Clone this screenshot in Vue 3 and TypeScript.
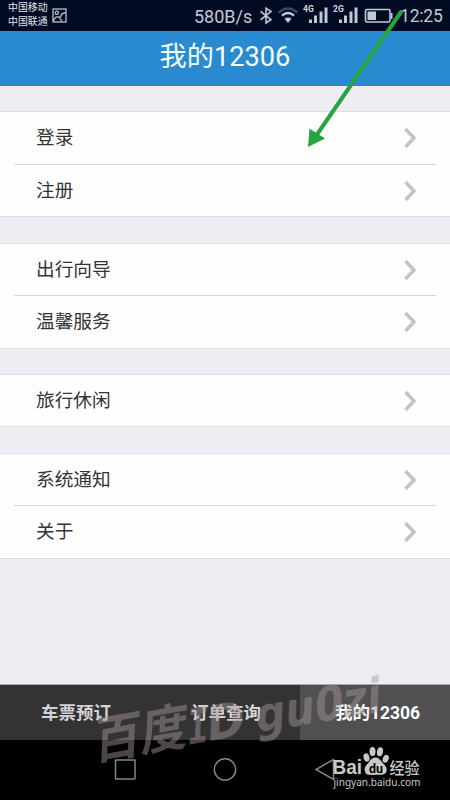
<script setup lang="ts">
import { ref } from 'vue'

interface MenuGroup {
  name: string
  items: string[]
}

const groups: MenuGroup[] = [
  { name: 'account', items: ['登录', '注册'] },
  { name: 'guide', items: ['出行向导', '温馨服务'] },
  { name: 'leisure', items: ['旅行休闲'] },
  { name: 'system', items: ['系统通知', '关于'] },
]

const tabs: string[] = ['车票预订', '订单查询', '我的12306']
const activeTab = ref(2)
</script>

<template>
  <div class="screen">
    <div class="status">
      <div class="carriers"><span>中国移动</span><span>中国联通</span></div>
      <svg class="picture" width="15" height="15" viewBox="0 0 15 15">
        <rect x="1" y="1" width="13" height="13" />
        <circle cx="4.800" cy="4.800" r="1.600" />
        <path d="M1.500 13Q3 8.500 6 9T9 7.500Q9.500 5.500 13.500 4.500M7.500 9.500L10 13.500" />
      </svg>
      <span class="speed">580B/s</span>
      <svg class="indicators" width="140" height="31" viewBox="0 0 140 31">
        <path class="line" d="M4.500 11.300L15 19.600L10 23V8.200L15 11.600L4.500 19.900" />
        <g class="wifi">
          <path class="dim" d="M22.500 12.600Q32 4.600 41.500 12.600" />
          <path d="M26 15.600Q32 10.600 38 15.600" />
        </g>
        <path class="fill" d="M28.500 18.800Q32 16 35.500 18.800L32 23Z" />
        <text class="net" x="47" y="11.500">4G</text>
        <path class="fill" d="M53 19.500h3v3.500h-3zM58 15.500h3V23h-3zM63.500 11.500h3V23h-3zM68.500 7.500h3V23h-3z" />
        <text class="net" x="77" y="11.500">2G</text>
        <path class="fill" d="M83 19.500h3v3.500h-3zM88 15.500h3V23h-3zM93.500 11.500h3V23h-3zM98.500 7.500h3V23h-3z" />
        <rect class="battery" x="109.500" y="9.500" width="24.500" height="12.500" rx="1.500" />
        <path class="fill" d="M111.500 11.500h8.500v8.500h-8.500zM135 13h1.500v6H135z" />
      </svg>
      <span class="clock">12:25</span>
    </div>

    <header class="header">我的12306</header>

    <main class="content">
      <section v-for="group in groups" :key="group.name" class="group" :class="group.name">
        <div v-for="item in group.items" :key="item" class="row">
          <span>{{ item }}</span>
          <svg class="chevron" width="14" height="22" viewBox="0 0 14 22">
            <path d="M2.500 2L11 11L2.500 20" />
          </svg>
        </div>
      </section>
    </main>

    <nav class="tabs">
      <button
        v-for="(tab, index) in tabs"
        :key="tab"
        class="tab"
        :class="{ active: index === activeTab }"
        @click="activeTab = index"
      >{{ tab }}</button>
    </nav>

    <div class="system-nav">
      <svg width="450" height="60" viewBox="0 0 450 60">
        <rect x="115.500" y="20" width="19.500" height="19" rx="0.500" />
        <circle cx="225" cy="29.500" r="10.700" />
        <path d="M333.500 19.500V39.500L316 29.500Z" />
      </svg>
    </div>

    <svg class="overlay" width="450" height="800" viewBox="0 0 450 800">
      <g class="signature" transform="translate(94 761) rotate(-9.800) skewX(-12)">
        <text class="signature-cn" x="0" y="-1" textLength="95" lengthAdjust="spacingAndGlyphs">百度</text>
        <text class="signature-mono" x="94" y="0" textLength="22" lengthAdjust="spacingAndGlyphs">I</text>
        <text class="signature-en" x="114" y="0" textLength="38" lengthAdjust="spacingAndGlyphs">D</text>
        <text class="signature-en" x="164" y="0" textLength="127" lengthAdjust="spacingAndGlyphs">gu0zi</text>
      </g>
      <g class="brand">
        <text class="brand-latin" x="332.500" y="773.500" textLength="29.500" lengthAdjust="spacingAndGlyphs">Bai</text>
        <ellipse cx="366.500" cy="757.500" rx="2.900" ry="4.200" transform="rotate(-15 366.500 757.500)" />
        <ellipse cx="372.500" cy="751.500" rx="3" ry="4.500" />
        <ellipse cx="380" cy="751.800" rx="3" ry="4.500" transform="rotate(10 380 751.800)" />
        <ellipse cx="385.700" cy="758.800" rx="2.900" ry="4.100" transform="rotate(20 385.700 758.800)" />
        <path d="M375.500 757.500C371 757.500 369.500 762 367 764.500C363.500 767.500 363.800 774.500 369.500 774.800C373 775 378 774.800 381.500 774.800C387.500 774.700 388 768 384.500 765C381.500 762 379.500 757.500 375.500 757.500Z" />
        <text class="brand-du" x="369" y="772.500" textLength="14" lengthAdjust="spacingAndGlyphs">du</text>
        <text class="brand-cn" x="389.500" y="773.500" textLength="30" lengthAdjust="spacingAndGlyphs">经验</text>
        <text class="brand-url" x="333.500" y="785.500" textLength="87" lengthAdjust="spacingAndGlyphs">jingyan.baidu.com</text>
      </g>
      <path class="arrow-line" d="M401 12L316 136" />
      <path class="arrow-head" d="M308 147L309.500 128.500L325 138.500Z" />
    </svg>
  </div>
</template>

<style>
body {
  margin: 0;
}
</style>

<style scoped>
.screen {
  position: relative;
  display: flex;
  flex-direction: column;
  width: 450px;
  height: 800px;
  overflow: hidden;
  background: #efedf4;
  font-family: Roboto, "Noto Sans CJK SC", sans-serif;
}
.status {
  display: flex;
  flex: none;
  height: 31px;
  box-sizing: border-box;
  padding-left: 8px;
  background: #020b24;
  color: #c3c8d3;
}
.carriers {
  display: flex;
  flex-direction: column;
  width: 44px;
  padding-top: 1px;
  color: #e4e6ec;
  font-size: 9.900px;
  line-height: 13.500px;
  white-space: nowrap;
}
.picture {
  margin-top: 8px;
  fill: none;
  stroke: #b9bfcc;
  stroke-width: 1.300;
}
.speed {
  width: 62px;
  margin-left: 127px;
  font-size: 18px;
  line-height: 33px;
}
.indicators {
  flex: none;
  fill: none;
}
.line,
.wifi,
.battery {
  stroke: #c3c8d3;
  stroke-width: 1.600;
}
.wifi {
  stroke-width: 2.400;
}
.dim {
  stroke: #3c4658;
}
.fill {
  fill: #c3c8d3;
}
.net {
  fill: #d5d9e0;
  font-size: 8.500px;
  font-weight: 700;
}
.clock {
  margin-left: 4px;
  font-size: 17.500px;
  line-height: 33px;
  letter-spacing: -0.200px;
  white-space: nowrap;
}
.header {
  flex: none;
  height: 55px;
  background: #298ad0;
  color: #f5fdff;
  font-size: 27.200px;
  line-height: 53px;
  text-align: center;
}
.content {
  flex: none;
  height: 598px;
  box-sizing: border-box;
  padding-top: 25px;
}
.group {
  display: flex;
  flex-direction: column;
  height: 106px;
  box-sizing: border-box;
  margin-bottom: 25px;
  border: solid #dfdde3;
  border-width: 1px 0;
  background: #fefefe;
}
.group.account {
  margin-bottom: 26px;
}
.group.leisure {
  height: 53px;
  margin-bottom: 26px;
}
.row {
  display: flex;
  flex: 1;
  align-items: center;
  justify-content: space-between;
  box-sizing: border-box;
  margin: 0 14px;
  padding: 0 19px 0 22px;
  color: #343336;
  font-size: 18.700px;
  line-height: 26px;
}
.row:first-child:not(:last-child) {
  flex: none;
  height: 51px;
}
.account .row:first-child:not(:last-child) {
  height: 52px;
}
.row + .row {
  border-top: 1px solid #d8d6dc;
}
.chevron {
  fill: none;
  stroke: #c5c3c8;
  stroke-width: 3.500;
}
.tabs {
  display: grid;
  grid-template-columns: 150px 150px 150px;
  flex: none;
  height: 56px;
  box-sizing: border-box;
  border-top: 1px solid #aaa9ad;
  background: #333234;
}
.tab {
  box-sizing: border-box;
  padding: 2px 0 0 2px;
  border: 0;
  background: transparent;
  color: #d4d3d5;
  font: 700 17.500px/53px Roboto, "Noto Sans CJK SC", sans-serif;
}
.tab.active {
  padding-left: 5px;
  background: #504f51;
  color: #fff;
}
.system-nav {
  flex: none;
  height: 60px;
  background: #000;
}
.system-nav svg {
  display: block;
  fill: none;
  stroke: #858585;
  stroke-width: 1.500;
}
.overlay {
  position: absolute;
  inset: 0;
  pointer-events: none;
}
.signature {
  fill: #a8989a;
  opacity: 0.450;
}
.signature-cn {
  font-family: "Noto Sans CJK SC", sans-serif;
  font-size: 51px;
  font-weight: 700;
}
.signature-mono {
  font-family: "DejaVu Sans Mono", monospace;
  font-size: 48px;
  font-weight: 700;
}
.signature-en {
  font-family: "DejaVu Sans", sans-serif;
  font-size: 48px;
  font-weight: 700;
}
.brand {
  fill: #c9c9c9;
}
.brand-latin {
  font-family: "Liberation Sans", sans-serif;
  font-size: 19.500px;
  font-weight: 700;
}
.brand-du {
  fill: #000;
  font-size: 13px;
  font-weight: 700;
}
.brand-cn {
  font-family: "Noto Sans CJK SC", sans-serif;
  font-size: 16px;
  font-weight: 500;
}
.brand-url {
  font-family: "Noto Sans", sans-serif;
  font-size: 10.500px;
}
.arrow-line {
  fill: none;
  stroke: #24a53f;
  stroke-width: 4;
  stroke-linecap: round;
}
.arrow-head {
  fill: #24a53f;
}
</style>
